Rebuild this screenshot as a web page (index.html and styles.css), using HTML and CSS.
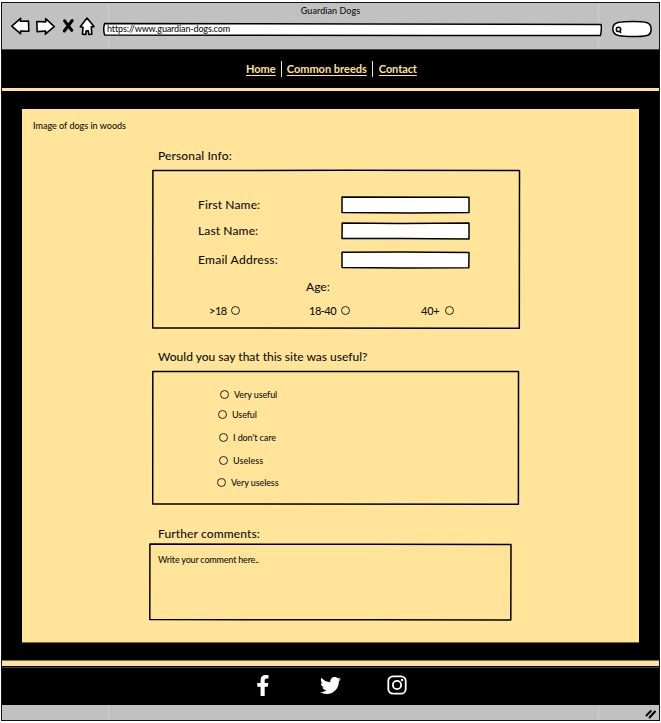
FILE: index.html
```html
<!DOCTYPE html>
<html lang="en">
<head>
<meta charset="utf-8">
<title>Guardian Dogs</title>
<link rel="stylesheet" href="styles.css">
</head>
<body>
<div class="window">
  <header class="chrome">
    <div class="title">Guardian Dogs</div>
    <div class="toolbar">
      <svg class="tools" width="86" height="22" viewBox="10 15 86 22">
        <g fill="#fff" stroke="#000" stroke-width="1.6" stroke-linejoin="round">
          <path d="M11.8 26.2 L20.6 18.3 L20.4 21.3 L28.5 21 L28.8 31.2 L20.5 31 L20.6 33.8 Z"/>
          <path d="M54.2 26.6 L45.6 18.5 L45.8 21.9 L36.8 21.5 L37.2 31.6 L45.7 31 L45.3 34.2 Z"/>
          <path d="M87 18 L94 26.6 L91.3 26.8 L91.8 34.2 L88.8 34.4 L88.3 30.8 L86 31 L85.9 34.4 L82.5 34.2 L83 27.2 L80.3 26.7 Z"/>
        </g>
        <path d="M64.6 20.8 L71.8 30.4 M72.2 20.5 L64.3 31" fill="none" stroke="#000" stroke-width="3" stroke-linecap="round"/>
      </svg>
      <div class="address">
        <svg class="sketch" viewBox="0 0 500 15"><path d="M2.600 1.500 C120 1.700 300 1.300 499 2.400 Q500 7 498.400 13.600 C330 13.400 200 13.800 2.600 12.900 Q.8 7 2.600 1.500Z"/></svg>
        <span class="url">https://www.guardian-dogs.com</span>
      </div>
      <svg class="search" width="41" height="18" viewBox="611 20 41 18">
        <path d="M618 22.5 C625 21 642 21 646.5 22.5 C652.5 24 652.7 34 647 35.4 C640 37 625 36.8 618.500 35.6 C611 34 611 24 618 22.5Z" fill="#fff" stroke="#000" stroke-width="1.5"/>
        <path d="M616.3 29.4 a2.200 2.200 0 1 1 4.400 0 a2.200 2.200 0 1 1 -4.400 0 M619.200 31 L621 33" fill="none" stroke="#000" stroke-width="1.5"/>
      </svg>
    </div>
  </header>

  <nav class="nav">
    <a href="#">Home</a><i></i><a href="#" class="breeds">Common breeds</a><i></i><a href="#" class="contact">Contact</a>
  </nav>
  <div class="rule top"></div>

  <main class="panel">
    <p class="caption">Image of dogs in woods</p>

    <h2 class="h-info">Personal Info:</h2>
    <section class="box info">
      <svg class="sketch" viewBox="0 0 369 160"><path d="M.9 1.400 C130 1.900 240 .8 367.500 1.600 L367.300 159.300 C250 158.700 130 159.600 .7 159Z"/></svg>
      <div class="field"><label class="l-first">First Name:</label><div class="input"><svg class="sketch" viewBox="0 0 129 18"><path d="M1 1 L128 1.2 L128 16.4 L70 17 L1 16.6Z"/></svg></div></div>
      <div class="field last"><label class="l-last">Last Name:</label><div class="input"><svg class="sketch" viewBox="0 0 129 18"><path d="M1.2 1 L60 1.400 L128 1 L128 17 L60 16.4 L1 16.6Z"/></svg></div></div>
      <div class="field mail"><label class="l-mail">Email Address:</label><div class="input"><svg class="sketch" viewBox="0 0 129 18"><path d="M1 1.2 L60 1 L128 1.5 L127.800 16.8 L60 17 L1 16.5Z"/></svg></div></div>
      <div class="age">Age:</div>
      <div class="ages">
        <span class="a1"><b>&gt;18</b><em class="radio"></em></span>
        <span class="a2"><b>18-40</b><em class="radio"></em></span>
        <span class="a3"><b>40+</b><em class="radio"></em></span>
      </div>
    </section>

    <h2 class="h-useful">Would you say that this site was useful?</h2>
    <section class="box rating">
      <svg class="sketch" viewBox="0 0 368 135"><path d="M.8 1.400 C130 2 240 1.100 366.500 1.600 L366.400 134.200 C250 133.700 130 134.500 .7 134Z"/></svg>
      <div class="option o1"><em class="radio"></em><span>Very useful</span></div>
      <div class="option o2"><em class="radio"></em><span>Useful</span></div>
      <div class="option o3"><em class="radio"></em><span>I don't care</span></div>
      <div class="option o4"><em class="radio"></em><span>Useless</span></div>
      <div class="option o5"><em class="radio"></em><span>Very useless</span></div>
    </section>

    <h2 class="h-comments">Further comments:</h2>
    <section class="box comments">
      <svg class="sketch" viewBox="0 0 363 78"><path d="M.9 1 C130 1.800 240 1 362 1.5 L361.800 77 C240 76.500 130 77.4 .8 76.6Z"/></svg>
      <p>Write your comment here..</p>
    </section>
  </main>

  <div class="rule bottom"></div>
  <footer class="social">
    <svg class="fb" width="13" height="21" viewBox="22 0 257 512"><path fill="#fff" d="M279 288l14-93h-89v-60c0-25 12-50 52-50h41V6s-37-6-72-6c-73 0-121 44-121 125v70H23v93h81v224h100V288z"/></svg>
    <svg class="tw" width="21" height="21" viewBox="0 0 512 512"><path fill="#fff" d="M459.400 151.700c.3 4.500.3 9.100.3 13.600 0 138.700-105.600 298.600-298.600 298.600-59.500 0-114.700-17.200-161.100-47.100 8.400 1 16.600 1.300 25.300 1.300 49.100 0 94.200-16.600 130.300-44.800-46.100-1-84.800-31.200-98.100-72.800 6.500 1 13 1.600 19.800 1.600 9.400 0 18.800-1.300 27.600-3.600-48.100-9.700-84.100-52-84.100-103v-1.300c14 7.800 30.200 12.700 47.400 13.300-28.300-18.800-46.800-51-46.800-87.400 0-19.500 5.200-37.400 14.300-53 51.700 63.700 129.300 105.300 216.400 109.800-1.600-7.800-2.600-15.900-2.600-24 0-57.800 46.800-104.900 104.900-104.900 30.200 0 57.500 12.700 76.700 33.100 23.700-4.500 46.500-13.300 66.600-25.300-7.800 24.400-24.400 44.800-46.100 57.800 21.100-2.300 41.600-8.100 60.400-16.200-14.300 20.800-32.200 39.300-52.600 54.300z"/></svg>
    <svg class="ig" width="20" height="20" viewBox="0 0 20 20"><g fill="none" stroke="#fff" stroke-width="1.8"><rect x="1.300" y="1.300" width="17.400" height="17.400" rx="4.800"/><circle cx="10" cy="10" r="4.100"/></g><circle cx="15" cy="5" r="1.200" fill="#fff"/></svg>
  </footer>
  <div class="status"><svg width="12" height="10" viewBox="0 0 12 10"><path d="M1.500 6.500 L5.800 2 M4.600 8.500 L10 2.500" stroke="#000" stroke-width="2" stroke-linecap="round"/></svg></div>
</div>
</body>
</html>
```
FILE: styles.css
```css
* { box-sizing: border-box; }
body { margin: 0; width: 661px; height: 723px; background: #fff; overflow: hidden; font-family: Lato, "Open Sans", sans-serif; font-weight: 500; color: #111; }
p, h2 { margin: 0; font-weight: inherit; white-space: nowrap; }
em, b { font-style: normal; font-weight: inherit; }

.window { width: 659px; height: 719px; margin: 2px 0 0 1px; background: #000; border: 1px solid #111; overflow: hidden; }
.sketch { position: absolute; inset: 0; width: 100%; height: 100%; fill: none; stroke: #000; stroke-width: 1.5; stroke-linejoin: round; }

/* faint vertical seams run through both grey bars */
.chrome, .status { background: linear-gradient(#cecece, #cecece) 106px 0 / 1px 100% no-repeat, linear-gradient(#cecece, #cecece) 596px 0 / 1px 100% no-repeat, #c1c1c1; }
.chrome { height: 47px; border-bottom: 1px solid #444; }
.title { height: 16px; line-height: 16px; font-size: 9px; letter-spacing: .05px; text-align: center; }
.toolbar { display: flex; align-items: flex-start; padding-left: 8px; }
.tools { margin-top: -4px; }
.address { position: relative; width: 500px; height: 15px; margin: 3px 0 0 6px; }
.address .sketch { fill: #fff; }
.url { position: relative; display: block; padding-left: 5px; line-height: 14px; font-size: 9px; letter-spacing: -.15px; }
.search { margin: 1px 0 0 9px; }

.nav { height: 38px; display: flex; align-items: center; padding: 0 0 1px 244px; font-size: 11px; font-weight: 700; }
.nav a { color: #ffe39a; text-decoration: underline; text-decoration-thickness: 1px; text-underline-offset: 2px; white-space: nowrap; }
.nav i { width: 1px; height: 16px; margin: 1px 5px 0; background: #ffe39a; }
.nav .contact { margin-left: 1px; letter-spacing: -.1px; }
.rule { background: #fde2a0; }
.rule.top { height: 3px; }
.rule.bottom { height: 6px; border: 1px solid #80704a; border-width: 1px 0 0; box-shadow: 0 1px #000, 0 2px #4d432a; }

.panel { width: 617px; height: 534px; margin: 18px 0 17px 20px; background: #ffe49a; border: solid #75683f; border-width: 0 0 1px; padding-top: 11px; overflow: hidden; }
.caption { height: 12px; line-height: 12px; padding-left: 11px; font-size: 9px; }
h2 { height: 16px; line-height: 16px; padding-left: 136px; font-size: 12px; }
.box { position: relative; margin-left: 130px; }

.h-info { margin-top: 16px; letter-spacing: .12px; }
.info { width: 369px; height: 160px; margin-top: 5px; padding-top: 27px; }
.field { display: flex; align-items: center; height: 18px; font-size: 12px; }
.field label { width: 143px; margin-left: 46px; padding-bottom: 2px; }
.l-first, .l-last { letter-spacing: .12px; }
.l-mail { letter-spacing: .25px; }
.field.last { margin-top: 8px; }
.field.mail { margin-top: 11px; }
.input { position: relative; width: 129px; height: 18px; }
.input .sketch { fill: #fff; }
.age { height: 16px; line-height: 16px; margin-top: 10px; padding-left: 154px; font-size: 12px; }
.ages { display: flex; height: 12px; margin-top: 9px; padding-left: 57px; font-size: 11px; letter-spacing: -.5px; }
.ages span { display: flex; align-items: center; justify-content: space-between; height: 12px; }
.a1 { width: 31px; }
.a2 { width: 41px; margin-left: 69px; }
.a3 { width: 33px; margin-left: 71px; }
.a3 b { letter-spacing: -.2px; }
.radio { flex: none; width: 9px; height: 9px; border: 1px solid #222; border-radius: 50%; }

.h-useful { margin-top: 20px; }
.rating { width: 368px; height: 135px; margin-top: 5px; padding-top: 18px; }
.option { display: flex; align-items: center; gap: 5px; height: 12px; font-size: 9px; letter-spacing: -.1px; white-space: nowrap; }
.o1 { margin-left: 68px; }
.o2 { margin: 8px 0 0 66px; }
.o3 { margin: 11px 0 0 67px; }
.o4 { margin: 11px 0 0 67px; letter-spacing: .05px; }
.o5 { margin: 10px 0 0 65px; }

.h-comments { margin-top: 21px; letter-spacing: .12px; }
.comments { width: 363px; height: 78px; margin: 1px 0 0 127px; padding: 11px 0 0 9px; }
.comments p { line-height: 12px; font-size: 9px; letter-spacing: -.2px; }

.social { height: 39px; display: flex; align-items: center; padding: 0 0 1px 254px; }
.tw { margin-left: 51px; }
.ig { margin-left: 46px; }
.status { height: 15px; display: flex; align-items: center; justify-content: flex-end; padding: 2px 2px 0 0; }
```
